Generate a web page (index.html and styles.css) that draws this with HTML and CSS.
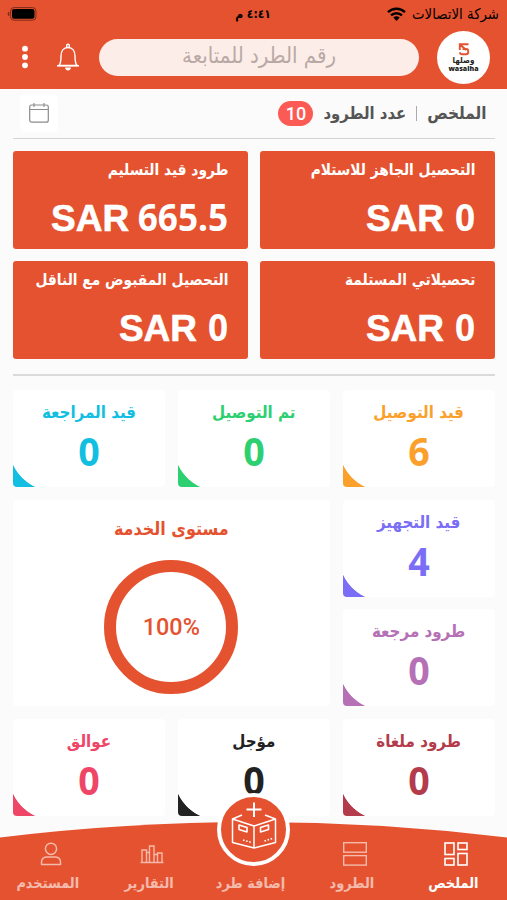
FILE: index.html
```html
<!DOCTYPE html>
<html lang="ar" dir="rtl">
<head>
    <meta charset="UTF-8">
    <meta name="viewport" content="width=device-width, initial-scale=1.0">
    <title>الملخص</title>
    <link rel="stylesheet" href="styles.css">
</head>
<body>
    <div class="statusbar">
        <div class="statusbar__carrier">
            <span>شركة الاتصالات</span>
            <svg width="19" height="14" viewBox="0 0 19 14">
                <path d="M1 5.2a12.2 12.2 0 0 1 17 0M4 8.4a8 8 0 0 1 11 0" fill="none" stroke="#000" stroke-width="2.4"/>
                <path d="M6.3 10.6a4.6 4.6 0 0 1 6.4 0L9.5 14z"/>
            </svg>
        </div>
        <div class="statusbar__time">٤:٤١ م</div>
        <svg class="statusbar__battery" width="30" height="14" viewBox="0 0 30 14">
            <rect x="3.6" y=".6" width="25.4" height="12.6" rx="3.4" fill="none" stroke="#7d2c19" stroke-width="1"/>
            <rect x="5" y="2" width="22.5" height="9.8" rx="2"/>
            <path d="M2.4 4.6v4.6Q.6 8.6 .6 6.9T2.4 4.6" fill="#7d2c19"/>
        </svg>
    </div>

    <div class="header">
        <div class="logo">
            <svg width="12" height="13" viewBox="0 0 12 13">
                <path d="M10.5 1.3H1.8V7M2.200 1.700l6 5.300M4.500 6h3.700a2 2 0 0 1 2 2v1.300a2 2 0 0 1-2 2H4a2 2 0 0 1-2-2" fill="none" stroke="#e5522f" stroke-width="1.900"/>
            </svg>
            <span class="logo__ar">وصلها</span>
            <span class="logo__en" dir="ltr">wasalha</span>
        </div>
        <div class="header__search"><span>رقم الطرد للمتابعة</span></div>
        <svg class="header__bell" width="24" height="28" viewBox="0 0 24 28">
            <path d="M2 22.500h20M3.400 22Q5 19.500 5 13c0-5 2.500-8.500 7-8.500s7 3.500 7 8.500q0 6.500 1.600 9M10.700 4.500V2.200q0-1 1.300-1t1.300 1v2.300" fill="none" stroke="#fff" stroke-width="1.400" stroke-linejoin="round"/>
            <path d="M1 22h22v1.600H1zM9 24.500h6q-.5 3-3 3t-3-3z" fill="#fff"/>
        </svg>
        <svg class="header__menu" width="6" height="24" viewBox="0 0 6 24" fill="#fff">
            <circle cx="3" cy="3.700" r="2.900"/>
            <circle cx="3" cy="12" r="2.900"/>
            <circle cx="3" cy="20.300" r="2.900"/>
        </svg>
    </div>

    <div class="container">
        <div class="summary">
            <span class="summary__title">الملخص</span>
            <span class="summary__divider"></span>
            <span class="summary__label">عدد الطرود</span>
            <span class="summary__count">10</span>
            <div class="summary__calendar">
                <svg width="20" height="20" viewBox="0 0 20 20" fill="none" stroke="#8b8b8b">
                    <rect x=".7" y="2" width="18.600" height="17.200" rx="2" stroke-width="1.200"/>
                    <path d="M1 6.500h18M5 0v4M15 0v4" stroke-width="1.100"/>
                </svg>
            </div>
        </div>

        <div class="amounts">
            <div class="amount">
                <h4 class="amount__title">التحصيل الجاهز للاستلام</h4>
                <p class="amount__value" dir="ltr">SAR <span>0</span></p>
            </div>
            <div class="amount">
                <h4 class="amount__title">طرود قيد التسليم</h4>
                <p class="amount__value amount__value--long" dir="ltr">SAR <span>665.5</span></p>
            </div>
            <div class="amount">
                <h4 class="amount__title">تحصيلاتي المستلمة</h4>
                <p class="amount__value" dir="ltr">SAR <span>0</span></p>
            </div>
            <div class="amount">
                <h4 class="amount__title">التحصيل المقبوض مع الناقل</h4>
                <p class="amount__value" dir="ltr">SAR <span>0</span></p>
            </div>
        </div>

        <div class="stats">
            <div class="card card--orange">
                <h4 class="card__title">قيد التوصيل</h4>
                <p class="card__value">6</p>
            </div>
            <div class="card card--green">
                <h4 class="card__title">تم التوصيل</h4>
                <p class="card__value">0</p>
            </div>
            <div class="card card--cyan">
                <h4 class="card__title">قيد المراجعة</h4>
                <p class="card__value">0</p>
            </div>
            <div class="card card--violet">
                <h4 class="card__title">قيد التجهيز</h4>
                <p class="card__value">4</p>
            </div>
            <div class="service">
                <h4 class="service__title">مستوى الخدمة</h4>
                <div class="service__ring" dir="ltr">100%</div>
            </div>
            <div class="card card--purple">
                <h4 class="card__title">طرود مرجعة</h4>
                <p class="card__value">0</p>
            </div>
            <div class="card card--red">
                <h4 class="card__title">طرود ملغاة</h4>
                <p class="card__value">0</p>
            </div>
            <div class="card card--black">
                <h4 class="card__title">مؤجل</h4>
                <p class="card__value">0</p>
            </div>
            <div class="card card--pink">
                <h4 class="card__title">عوالق</h4>
                <p class="card__value">0</p>
            </div>
        </div>
    </div>

    <div class="tabbar">
        <svg class="tabbar__bg" width="507" height="78" viewBox="0 0 507 78">
            <path d="M0 15.500Q127 0 253.500 0T507 15.500V78H0z" fill="#e5522f"/>
        </svg>
        <div class="tab tab--active">
            <svg width="24" height="24" viewBox="0 0 24 24" fill="none" stroke="#fff" stroke-width="1.600">
                <rect x="1" y="1" width="9" height="11.500"/>
                <rect x="14" y="1" width="9" height="6.500"/>
                <rect x="1" y="16.500" width="9" height="6.500"/>
                <rect x="14" y="11.500" width="9" height="11.500"/>
            </svg>
            <span>الملخص</span>
        </div>
        <div class="tab">
            <svg width="24" height="24" viewBox="0 0 24 24" fill="none" stroke="#fff" stroke-width="1.400">
                <rect x=".7" y=".7" width="22.600" height="9.500"/>
                <rect x=".7" y="13.600" width="22.600" height="9.500"/>
            </svg>
            <span>الطرود</span>
        </div>
        <div class="tab">
            <span>إضافة طرد</span>
        </div>
        <div class="tab">
            <svg width="24" height="24" viewBox="0 0 24 24" fill="none" stroke="#fff" stroke-width="1.400">
                <path d="M.5 20.500h23M2 20.500V8h4.500v12.500M9.500 20.500V4h4.500v16.500M17.500 20.500V11H22v9.500M6.500 10.500h3M14 12.500h3.500"/>
            </svg>
            <span>التقارير</span>
        </div>
        <div class="tab">
            <svg width="24" height="24" viewBox="0 0 24 24" fill="none" stroke="#fff" stroke-width="1.500">
                <circle cx="12" cy="6.800" r="5.600"/>
                <path d="M2.500 22.500v-2.500q0-5 6-5h7q6 0 6 5v2.500z" stroke-linejoin="round"/>
            </svg>
            <span>المستخدم</span>
        </div>
        <div class="tabbar__add">
            <svg width="64" height="64" viewBox="0 0 64 64" fill="none" stroke="#fff" stroke-width="1.500" stroke-linejoin="round">
                <path d="M32 5.500v14.500M24.500 12.500h15" stroke-width="2"/>
                <path d="M20 18l-9.500 4L32 29l21.500-7L43 18M10.500 22v23.500L32 51l21.500-5.500V22M32 29v22"/>
                <path d="M17 28l8 2.500v4.500l-8-2.500zM38.500 30.500l8-2.500v4.500l-8 2.500z" stroke-width="1.600"/>
                <path d="M21 43l8.500 2.500M42.500 44l8-2.500" stroke-width="1.600" stroke-dasharray="1.600 1.600"/>
            </svg>
        </div>
    </div>
</body>
</html>
```
FILE: styles.css
```css
* {
    margin: 0;
    padding: 0;
    box-sizing: border-box;
}

body {
    width: 507px;
    height: 900px;
    overflow: hidden;
    background-color: #fbfbfb;
    font-family: "DejaVu Sans Condensed", "DejaVu Sans", sans-serif;
    color: #555;
}

svg {
    display: block;
    flex: none;
}

.statusbar {
    height: 27px;
    background-color: #e5522f;
    color: #000;
    display: grid;
    grid-template-columns: 1fr auto 1fr;
    align-items: center;
    padding: 0 8px 0 7px;
    font-size: 14.8px;
}

.statusbar__carrier {
    display: flex;
    align-items: center;
    gap: 6px;
    white-space: nowrap;
}

.statusbar__time {
    font-weight: bold;
    font-size: 12px;
}

.statusbar__battery {
    justify-self: end;
}

.header {
    height: 61.5px;
    background-color: #e5522f;
    display: flex;
    align-items: center;
    padding: 0 17px 1px 22px;
}

.logo {
    width: 53px;
    height: 53px;
    border-radius: 50%;
    background-color: #fff;
    display: flex;
    flex-direction: column;
    align-items: center;
    padding-top: 12px;
    color: #222;
}

.logo__ar {
    font-size: 8px;
    font-weight: bold;
    line-height: 9px;
}

.logo__en {
    font-family: "Open Sans", sans-serif;
    font-size: 7px;
    font-weight: 800;
    line-height: 7px;
}

.header__search {
    width: 320px;
    height: 37px;
    margin: 0 18px 0 19px;
    border-radius: 19px;
    background-color: #fcede8;
    color: #b9a9a5;
    font-size: 22px;
    display: flex;
    align-items: center;
    justify-content: center;
}

.header__search span {
    line-height: 24px;
    padding-bottom: 2px;
}

.header__menu {
    margin-right: auto;
}

.container {
    padding: 0 12.5px 0 13px;
}

.summary {
    height: 50px;
    display: flex;
    align-items: center;
    padding: 0 8px 0 7px;
    border-bottom: 1.5px solid #d4d4d4;
    font-size: 17px;
    font-weight: bold;
}

.summary__divider {
    width: 1px;
    height: 15px;
    background-color: #aaa;
    margin: 0 10px;
}

.summary__label {
    font-size: 16.5px;
}

.summary__count {
    width: 35px;
    height: 25px;
    margin-right: 10px;
    border-radius: 13px;
    background-color: #fb5a55;
    color: #fff;
    font: 500 18px/25px Roboto, sans-serif;
    text-align: center;
}

.summary__calendar {
    width: 38px;
    height: 38px;
    margin-right: auto;
    border-radius: 5px;
    background-color: #fff;
    display: flex;
    align-items: center;
    justify-content: center;
}

.amounts {
    display: grid;
    grid-template-columns: 1fr 1fr;
    gap: 12.5px;
    padding: 12px 0 15px;
    border-bottom: 2px solid #dadada;
}

.amount {
    height: 98px;
    border-radius: 3px;
    background-color: #e5522f;
    color: #fff;
    padding: 8px 19px;
}

.amount__title {
    font-size: 15.3px;
    line-height: 22px;
    white-space: nowrap;
}

.amount__value {
    margin-top: 13px;
    font: bold 37px/46px "Liberation Sans", sans-serif;
    -webkit-text-stroke: 0.6px #fff;
    text-align: right;
}

.amount__value span {
    display: inline-block;
    font-family: "Noto Sans", sans-serif;
    line-height: 46px;
    -webkit-text-stroke: 0;
    transform: scaleX(0.95);
    transform-origin: right;
}

/* the squeezed digits leave a gap on their left */
.amount__value--long span {
    margin-left: -6px;
}

.stats {
    display: grid;
    grid-template-columns: repeat(3, 1fr);
    grid-auto-rows: 97px;
    gap: 12.5px 13px;
    padding-top: 14px;
}

.card {
    position: relative;
    background-color: #fff;
    border-radius: 4px;
    text-align: center;
    padding-top: 10px;
    overflow: hidden;
}

/* coloured corner with a concave edge */
.card::after {
    content: "";
    position: absolute;
    left: 0;
    bottom: 0;
    width: 22px;
    height: 22px;
    background: radial-gradient(circle at 42px -20px, transparent 46px, currentColor 46.8px);
}

.card__title {
    font-size: 16.8px;
    line-height: 24px;
}

.card__value {
    font: bold 40px/48px "Noto Sans", sans-serif;
    margin-top: 3px;
    transform: scaleX(0.94);
}

.card--orange { color: #fba12b; }
.card--green { color: #2dd071; }
.card--cyan { color: #13bfe1; }
.card--violet { color: #7b6ef6; }
.card--purple { color: #b570b6; }
.card--red { color: #b43b4b; }
.card--black { color: #222; }
.card--pink { color: #ef4566; }

.service {
    grid-column: 2 / 4;
    grid-row: 2 / 4;
    background-color: #fff;
    border-radius: 4px;
    color: #e5522f;
    display: flex;
    flex-direction: column;
    align-items: center;
    padding-top: 17px;
}

.service__title {
    font-size: 17.8px;
    line-height: 24px;
}

.service__ring {
    width: 134px;
    height: 134px;
    margin-top: 19px;
    border: 12.5px solid #e5522f;
    border-radius: 50%;
    font: 500 23.4px/110px Roboto, sans-serif;
    text-align: center;
}

.tabbar {
    position: absolute;
    left: 0;
    top: 822px;
    width: 507px;
    height: 78px;
    display: grid;
    grid-template-columns: repeat(5, 101.4px);
    color: #fff;
    font-size: 14.4px;
}

.tabbar__bg {
    position: absolute;
    left: 0;
    top: 0;
}

.tab {
    position: relative;
    display: flex;
    flex-direction: column;
    align-items: center;
    justify-content: flex-end;
    gap: 7px;
    padding-bottom: 7px;
    line-height: 20px;
    font-weight: bold;
    white-space: nowrap;
    opacity: 0.6;
}

.tab span {
    padding-right: 0;
    margin-right: 4px;
    transform: translateX(-1px);
}

.tab--active {
    opacity: 1;
}

.tabbar__add {
    position: absolute;
    left: 217px;
    top: -29px;
    width: 73px;
    height: 73px;
    border: 4.5px solid #fff;
    border-radius: 50%;
    background-color: #e5522f;
}
```
